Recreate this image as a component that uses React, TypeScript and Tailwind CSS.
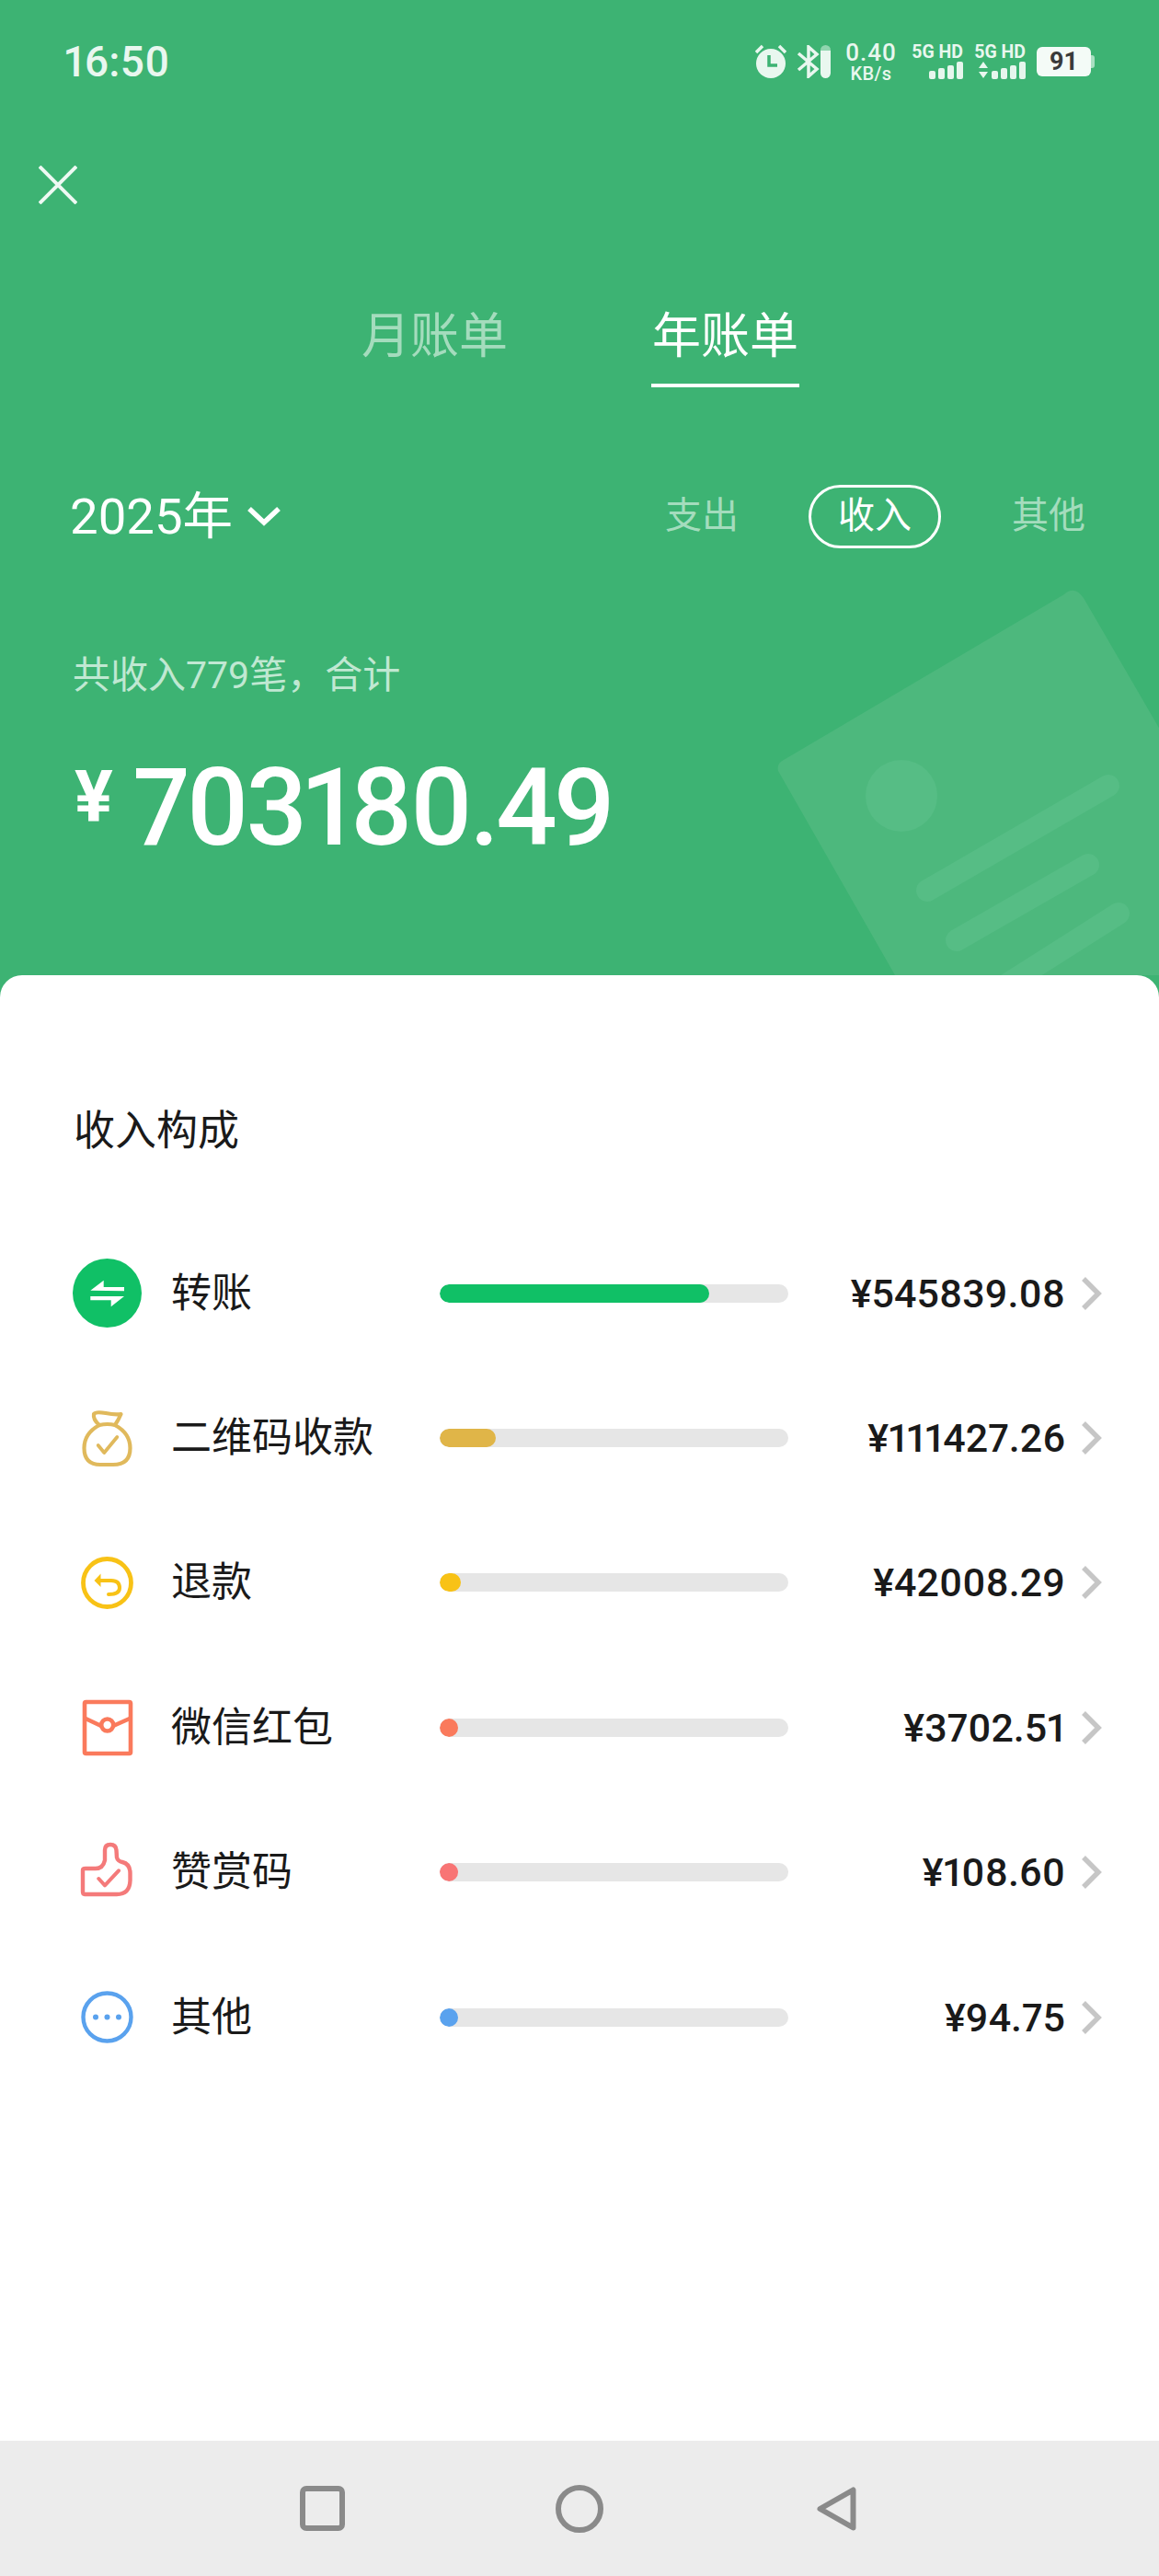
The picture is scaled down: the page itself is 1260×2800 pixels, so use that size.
import { ReactNode } from 'react';

interface RowProps {
  icon: ReactNode;
  label: string;
  fill: string;
  color: string;
  amount: string;
}

const TransferIcon = () => (
  <svg viewBox="0 0 75 75" className="w-[75px] h-[75px]">
    <circle cx="37.5" cy="37.5" r="37.5" fill="#10c066" />
    <polygon points="19.3,34.7 33.7,23.7 33.7,31 56,31 56,35.3" fill="#fff" />
    <polygon points="19.3,41 56,41 41.7,52.3 41.7,45.3 19.3,45.3" fill="#fff" />
  </svg>
);

const BagIcon = () => (
  <svg viewBox="0 0 75 75" className="w-[75px] h-[75px]" fill="none" stroke="#e0b95c" strokeWidth="4.2" strokeLinecap="round" strokeLinejoin="round">
    <path d="M29 23 Q22 17 23 11 Q25 8 36 10 Q46 12 52.500 11 Q50 17 46 23" />
    <path d="M29 23 Q38 21 46 23 Q62.500 32 62.500 48 Q62.500 66 44 66 L30 66 Q12.500 66 12.500 48 Q12.500 32 29 23 Z" />
    <path d="M27.700 45 L34.300 53 L48.300 36" strokeWidth="3.8" />
  </svg>
);

const RefundIcon = () => (
  <svg viewBox="0 0 75 75" className="w-[75px] h-[75px]" fill="none" stroke="#f8c216" strokeWidth="4.8" strokeLinecap="round">
    <circle cx="37.500" cy="37.500" r="26" />
    <polygon points="23.500,35 30.500,27.500 30.500,42" fill="#f8c216" stroke="none" />
    <path d="M30 35 L42 35 Q51 35 51 43 Q51 50 39 50" strokeWidth="4" />
  </svg>
);

const PacketIcon = () => (
  <svg viewBox="0 0 75 75" className="w-[75px] h-[75px]" fill="none" stroke="#fa7a5c" strokeWidth="4.6">
    <rect x="13" y="10" width="50" height="56" rx="1.500" strokeLinejoin="round" />
    <path d="M14 28 L31 36 M44 36 L62 28" />
    <circle cx="37.700" cy="35" r="6.500" />
  </svg>
);

const ThumbIcon = () => (
  <svg viewBox="0 0 75 75" className="w-[75px] h-[75px]" fill="none" stroke="#f47a7a" strokeWidth="4.4" strokeLinecap="round" strokeLinejoin="round">
    <path d="M13 61 Q11 61 11 58 L11 35 Q11 33 14 33 L25 33 Q33 33 35 24 L35 13 Q35 7 41 7 Q47 7 47.500 13 L48 21 Q49 25 54 26 Q62.500 28 62.500 38 L62.500 46 Q62 61 48 61 Z" />
    <path d="M28.300 44 L35 51.300 L50 35.300" strokeWidth="4" />
  </svg>
);

const MoreIcon = () => (
  <svg viewBox="0 0 75 75" className="w-[75px] h-[75px]" fill="none">
    <circle cx="37.500" cy="37.500" r="26" stroke="#5aa2ee" strokeWidth="4.4" />
    <circle cx="25" cy="37.500" r="3" fill="#5aa2ee" />
    <circle cx="37.500" cy="37.500" r="3" fill="#5aa2ee" />
    <circle cx="50" cy="37.500" r="3" fill="#5aa2ee" />
  </svg>
);

const rows: RowProps[] = [
  { icon: <TransferIcon />, label: '转账', fill: 'w-[293px]', color: 'bg-[#10c066]', amount: '¥545839.08' },
  { icon: <BagIcon />, label: '二维码收款', fill: 'w-[61px]', color: 'bg-[#e0b548]', amount: '¥111427.26' },
  { icon: <RefundIcon />, label: '退款', fill: 'w-[23px]', color: 'bg-[#f8c216]', amount: '¥42008.29' },
  { icon: <PacketIcon />, label: '微信红包', fill: 'w-[20px]', color: 'bg-[#fa7a5c]', amount: '¥3702.51' },
  { icon: <ThumbIcon />, label: '赞赏码', fill: 'w-[20px]', color: 'bg-[#f87575]', amount: '¥108.60' },
  { icon: <MoreIcon />, label: '其他', fill: 'w-[20px]', color: 'bg-[#5aa2ee]', amount: '¥94.75' },
];

const Row = ({ icon, label, fill, color, amount }: RowProps) => (
  <div className="flex items-center h-[157.4px] pl-[79px]">
    <div className="w-[75px] h-[75px] shrink-0">{icon}</div>
    <div className="w-[292px] ml-[32px] shrink-0 text-[44px] leading-[60px] text-[#1a1a1a]">{label}</div>
    <div className="w-[379px] h-[20px] shrink-0 rounded-full bg-[#e6e6e6] overflow-hidden">
      <div className={`h-full rounded-full ${fill} ${color}`} />
    </div>
    <div className="w-[301px] shrink-0 text-right text-[43px] leading-[60px] font-medium proportional-nums text-[#1a1a1a]">{amount}</div>
    <svg viewBox="0 0 24 40" className="w-[24px] h-[40px] ml-[16px]" fill="none" stroke="#c6c6c6" strokeWidth="5.5">
      <path d="M4 4 L20 20 L4 36" />
    </svg>
  </div>
);

const SignalBars = () => (
  <div className="flex items-end gap-[3px] h-[20px]">
    <div className="w-[7px] h-[9px] rounded-[2px] bg-[#e6f6ed]" />
    <div className="w-[7px] h-[12px] rounded-[2px] bg-[#e6f6ed]" />
    <div className="w-[7px] h-[15px] rounded-[2px] bg-[#e6f6ed]" />
    <div className="w-[7px] h-[19px] rounded-[2px] bg-[#e6f6ed]" />
  </div>
);

const StatusBar = () => (
  <div className="flex items-center justify-between h-[134px] pl-[70px] pr-[70px] text-[#e9f7ef]">
    <div className="text-[46px] leading-[50px] font-medium tracking-[0.3px] proportional-nums">16:50</div>
    <div className="flex items-center">
      <svg viewBox="0 0 34 38" className="w-[34px] h-[38px]">
        <circle cx="17" cy="21" r="16" fill="#e9f7ef" />
        <path d="M1 9 L8 2 M33 9 L26 2" stroke="#e9f7ef" strokeWidth="3.500" />
        <path d="M15 12 V23 H24" stroke="#3db373" strokeWidth="3.500" fill="none" />
      </svg>
      <svg viewBox="0 0 26 36" className="w-[26px] h-[36px] ml-[11px]" fill="none" stroke="#e9f7ef" strokeWidth="3.500">
        <path d="M2 9 L22 26 L13 34 V2 L22 10 L2 27" />
      </svg>
      <div className="w-[11px] h-[36px] rounded-full bg-[#8fd5ae] overflow-hidden flex items-end">
        <div className="w-full h-[30px] rounded-b-full bg-[#e9f7ef]" />
      </div>
      <div className="flex flex-col items-center w-[58px] ml-[15px] font-medium">
        <span className="text-[26px] leading-[25px] tracking-[1px]">0.40</span>
        <span className="text-[20px] leading-[20px] tracking-[0.4px]">KB/s</span>
      </div>
      <div className="flex flex-col items-end w-[58px] ml-[13px]">
        <span className="text-[19.5px] leading-[18px] font-bold whitespace-nowrap">5G HD</span>
        <SignalBars />
      </div>
      <div className="flex flex-col items-end w-[58px] ml-[10px] mr-[12px]">
        <span className="text-[19.5px] leading-[18px] font-bold whitespace-nowrap">5G HD</span>
        <div className="flex items-end gap-[4px]">
          <svg viewBox="0 0 10 20" className="w-[10px] h-[20px]" fill="#e9f7ef">
            <path d="M5 1 L10 8 H0 Z M5 19 L10 12 H0 Z" />
          </svg>
          <SignalBars />
        </div>
      </div>
      <div className="w-[59px] h-[32px] rounded-[6px] bg-[#f4fbf7] flex items-center justify-center text-[27px] leading-none font-bold text-[#3a3a3a]">
        91
      </div>
      <div className="w-[4px] h-[14px] rounded-r-[3px] bg-[#a9e0c2]" />
    </div>
  </div>
);

// faint bill drawing behind the total
const BillDecoration = () => (
  <svg viewBox="840 620 420 440" className="absolute right-0 bottom-0 w-[420px] h-[440px]">
    <path d="M1157 646 Q1168 636 1178 650 L1300 860 L1300 1060 L973 1060 L846 838 Q844 830 852 826 Z" fill="#4db87d" />
    <circle cx="980" cy="865" r="39" fill="#56bd85" />
    <g stroke="#56bd85" strokeWidth="24" strokeLinecap="round">
      <path d="M1008 968 L1205 854" />
      <path d="M1040 1022 L1183 940" />
      <path d="M1060 1092 L1216 993" />
    </g>
  </svg>
);

const NavBar = () => (
  <div className="flex items-center h-[147px] pl-[326px] gap-[229px] bg-[#ececec]">
    <svg viewBox="0 0 49 49" className="w-[49px] h-[49px]" fill="none" stroke="#8a8a8a" strokeWidth="6">
      <rect x="3" y="3" width="43" height="43" rx="4" />
    </svg>
    <svg viewBox="0 0 52 52" className="w-[52px] h-[52px]" fill="none" stroke="#8a8a8a" strokeWidth="6">
      <circle cx="26" cy="26" r="23" />
    </svg>
    <svg viewBox="0 0 43 48" className="w-[43px] h-[48px] ml-[3px]" fill="none" stroke="#8a8a8a" strokeWidth="6" strokeLinejoin="round">
      <path d="M39.500 3.500 V44.500 L3.500 24 Z" />
    </svg>
  </div>
);

const App = () => {
  return (
    <div className="w-[1260px] h-[2800px] flex flex-col bg-[#3db373] font-['Roboto','Noto_Sans_CJK_SC',sans-serif]">
      <div className="relative h-[1060px] shrink-0 overflow-hidden">
        <BillDecoration />
        <div className="relative">
          <StatusBar />

          <svg viewBox="0 0 42 42" className="w-[42px] h-[42px] ml-[42px] mt-[46px]" fill="none" stroke="#eef9f3" strokeWidth="4">
            <path d="M1 1 L41 41 M41 1 L1 41" />
          </svg>

          <div className="flex justify-center gap-[156px] ml-[2px] mt-[109px]">
            <div className="text-[53px] leading-[70px] text-[#a4dcbd]">月账单</div>
            <div className="flex flex-col items-center">
              <div className="text-[53px] leading-[70px] text-white">年账单</div>
              <div className="w-[161px] h-[4px] mt-[16px] bg-white" />
            </div>
          </div>

          <div className="flex items-center h-[70px] mt-[105px] pl-[76px]">
            <div className="text-[54.5px] leading-[70px] text-white">2025年</div>
            <svg viewBox="0 0 36 22" className="w-[36px] h-[22px] ml-[16px]" fill="none" stroke="#fff" strokeWidth="5.500">
              <path d="M2 3 L18 18 L34 3" />
            </svg>
            <div className="ml-auto mr-[80px] flex items-center text-[40px] text-[#a4dcbd]">
              <span>支出</span>
              <div className="w-[144px] h-[69px] ml-[76px] flex items-center justify-center rounded-full border-[3px] border-white text-white">
                收入
              </div>
              <span className="ml-[77px]">其他</span>
            </div>
          </div>

          <div className="mt-[113px] ml-[79px] text-[41px] leading-[50px] text-[#c0e8d2]">共收入779笔，合计</div>

          <div className="flex items-start mt-[54px] ml-[81px] text-white">
            <span className="text-[78px] leading-[70px] mt-[19px] font-bold">¥</span>
            <span className="text-[117px] leading-[130px] ml-[22px] font-medium tracking-[-3.7px] proportional-nums">703180.49</span>
          </div>
        </div>
      </div>

      <div className="flex-1 bg-white rounded-t-[24px]">
        <div className="mt-[140px] ml-[80px] text-[45px] leading-[60px] text-[#1a1a1a]">收入构成</div>
        <div className="mt-[67px]">
          {rows.map((row) => (
            <Row key={row.label} {...row} />
          ))}
        </div>
      </div>

      <NavBar />
    </div>
  );
};

export default App;
